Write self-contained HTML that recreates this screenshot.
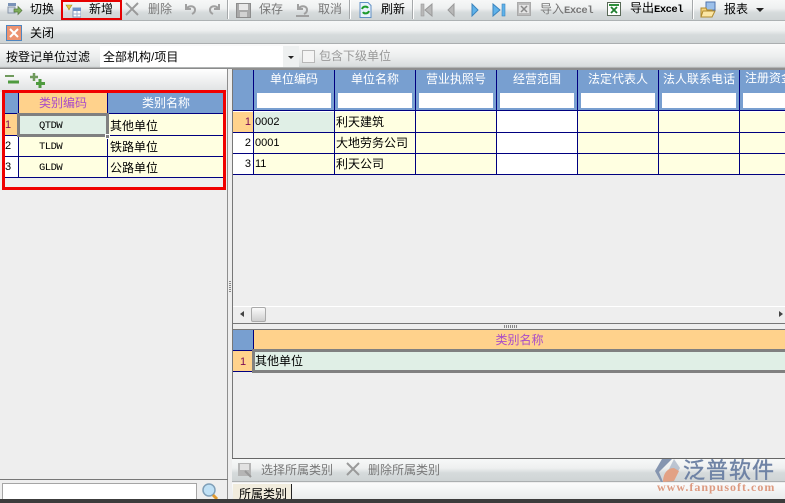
<!DOCTYPE html>
<html><head><meta charset="utf-8">
<style>
html,body{margin:0;padding:0;width:785px;height:503px;overflow:hidden;background:#eee}
body{position:relative;font:12px/14px "Liberation Sans","WenQuanYi Zen Hei","Noto Sans CJK SC",sans-serif;color:#000}
div,span,svg{position:absolute;box-sizing:border-box}
.t{white-space:nowrap}
.g{color:#777}
.bar{left:0;width:785px;background:linear-gradient(#f7f8f8,#eef0f0 40%,#d6dbdc 60%,#cfd4d5 95%,#8f9294)}
.m{font:10.5px/12px "Liberation Mono",monospace;letter-spacing:-.5px}
.x{position:static;font:bold 10.500px "Liberation Mono",monospace;letter-spacing:-.5px}
.sep{width:2px;top:0;height:19px;background:linear-gradient(90deg,#a5a8aa 50%,#fff 50%)}
.hd{color:#fff;text-align:center;background:#789fd0;white-space:nowrap;overflow:hidden}
.in{background:#fff;height:15px;top:93px}
.vl{width:1px;background:#000080}
.hl{height:1px;background:#000080}
.cell{background:#ffffe1}
</style></head><body>

<!-- toolbars -->
<div class="bar" style="top:0;height:21px"></div>
<div class="bar" style="top:21px;height:23px"></div>
<div class="bar" style="top:44px;height:25px;background:linear-gradient(#fbfbfb,#eceeee 50%,#d8dcdd 90%,#777)"></div>

<svg style="left:7px;top:2px" width="16" height="16" viewBox="0 0 16 16"><rect x="1" y="1" width="8" height="3" fill="#7a93b8"/><rect x="1" y="5" width="7" height="6" fill="#cfd8e4" stroke="#8896a8"/><path d="M7 7h4V4.500l4 4-4 4V10H7z" fill="#7fae5a" stroke="#55783f" stroke-width=".7"/></svg>
<span class="t" style="left:30px;top:2px">切换</span>

<svg style="left:65px;top:3px" width="16" height="15" viewBox="0 0 16 15"><path d="M1 2h6L5 5 4 7 3 5z" fill="#e3c93c" stroke="#a48d1d" stroke-width=".6"/><rect x="8" y="5" width="8" height="9" fill="#fff" stroke="#7f97bb"/><rect x="8" y="5" width="8" height="3" fill="#6f94c8"/><path d="M12 8v6M8 11h8" stroke="#9fb3cf"/></svg>
<span class="t" style="left:89px;top:2px">新增</span>
<div style="left:61px;top:0;width:61px;height:20px;border:2px solid #e60000"></div>

<svg style="left:125px;top:2px" width="14" height="14" viewBox="0 0 14 14"><path d="M1 1l12 12M13 1L1 13" stroke="#9a9a9a" stroke-width="2"/></svg>
<span class="t g" style="left:148px;top:2px">删除</span>
<svg style="left:184px;top:3px" width="13" height="13" viewBox="0 0 13 13"><path d="M2 1v5h5M3 5c3-3 8-2 8 2 0 2-1 3-3 4" fill="none" stroke="#a0a0a0" stroke-width="2"/></svg>
<svg style="left:208px;top:3px" width="13" height="13" viewBox="0 0 13 13"><path d="M11 1v5H6M10 5C7 2 2 3 2 7c0 2 1 3 3 4" fill="none" stroke="#a0a0a0" stroke-width="2"/></svg>
<div class="sep" style="left:227px"></div>
<svg style="left:236px;top:3px" width="15" height="15" viewBox="0 0 15 15"><rect x=".5" y=".5" width="14" height="14" fill="#a9a9a9" stroke="#8c8c8c"/><rect x="3" y="1" width="9" height="6" fill="#e8e8e8"/><rect x="4" y="9" width="7" height="5" fill="#d2d2d2"/></svg>
<span class="t g" style="left:259px;top:2px">保存</span>
<svg style="left:295px;top:3px" width="15" height="15" viewBox="0 0 15 15"><path d="M3 1v5h5M4 5c3-3 8-2 8 2 0 2-1 3-3 4" fill="none" stroke="#a0a0a0" stroke-width="2"/><path d="M1 13h13" stroke="#a0a0a0" stroke-width="2"/></svg>
<span class="t g" style="left:318px;top:2px">取消</span>
<div class="sep" style="left:349px"></div>
<svg style="left:359px;top:2px" width="13" height="16" viewBox="0 0 13 16"><path d="M1 .500h8l3 3v12H1z" fill="#e8f2fb" stroke="#5f8fc4"/><path d="M3 7c1-3 5-3 6-1M10 9c-1 3-5 3-6 1" fill="none" stroke="#1d9a2c" stroke-width="2"/></svg>
<span class="t" style="left:381px;top:2px">刷新</span>
<div class="sep" style="left:412px"></div>

<svg style="left:420px;top:3px" width="14" height="14" viewBox="0 0 14 14"><rect x="1" y="1" width="3" height="12" fill="#b8b8b8" stroke="#999" stroke-width=".6"/><path d="M12 1v12L5 7z" fill="#b8b8b8" stroke="#999"/></svg>
<svg style="left:446px;top:3px" width="10" height="14" viewBox="0 0 10 14"><path d="M8 1v12L2 7z" fill="#b8b8b8" stroke="#999"/></svg>
<svg style="left:470px;top:3px" width="10" height="14" viewBox="0 0 10 14"><path d="M2 1v12l6-6z" fill="#5fb2ea" stroke="#3b84bd"/></svg>
<svg style="left:492px;top:3px" width="14" height="14" viewBox="0 0 14 14"><path d="M1 1v12l7-6z" fill="#5fb2ea" stroke="#3b84bd"/><rect x="10" y="1" width="3" height="12" fill="#5fb2ea" stroke="#3b84bd" stroke-width=".6"/></svg>
<svg style="left:517px;top:2px" width="14" height="14" viewBox="0 0 14 14"><rect x=".5" y=".5" width="13" height="13" fill="#bbb" stroke="#aaa"/><rect x="2" y="3" width="10" height="8" fill="#e4e4e4"/><path d="M4 4l6 6M10 4l-6 6" stroke="#888" stroke-width="1.500"/></svg>
<span class="t g" style="left:540px;top:2px">导入<span class="x">Excel</span></span>
<svg style="left:607px;top:2px" width="14" height="14" viewBox="0 0 14 14"><rect x=".5" y=".5" width="13" height="13" fill="#fff" stroke="#5a6a58"/><rect x="2" y="2" width="10" height="2" fill="#2f8f3c"/><path d="M4 5l6 6M10 5l-6 6" stroke="#1f7f2f" stroke-width="1.800"/></svg>
<span class="t" style="left:630px;top:1px">导出<span class="x">Excel</span></span>
<div class="sep" style="left:692px"></div>
<svg style="left:700px;top:1px" width="16" height="17" viewBox="0 0 16 17"><rect x="6" y="1" width="9" height="8" fill="#9cc0ea" stroke="#4f74ad"/><path d="M1 7h5l1 2h5v7H1z" fill="#f4d27a" stroke="#b08a2e"/><path d="M3 10h12l-3 6H1z" fill="#fbe6a4" stroke="#b08a2e"/></svg>
<span class="t" style="left:724px;top:2px">报表</span>
<div style="left:756px;top:8px;width:0;height:0;border:4px solid transparent;border-top:4px solid #222;border-bottom:0"></div>

<svg style="left:6px;top:25px" width="16" height="16" viewBox="0 0 16 16"><rect x=".5" y=".5" width="15" height="15" fill="#ec9270" stroke="#4f86c0"/><path d="M4 4l8 8M12 4l-8 8" stroke="#fff" stroke-width="2"/></svg>
<span class="t" style="left:30px;top:26px">关闭</span>

<span class="t" style="left:6px;top:50px">按登记单位过滤</span>
<div style="left:100px;top:46px;width:199px;height:21px;background:#fff"></div>
<span class="t" style="left:103px;top:50px">全部机构/项目</span>
<div style="left:283px;top:46px;width:16px;height:21px;background:#eef0f0"></div>
<div style="left:288px;top:56px;border:3px solid transparent;border-top:3px solid #222;border-bottom:0"></div>
<div style="left:302px;top:50px;width:13px;height:13px;background:#f4f4f4;border:1px solid #b8b8b8"></div>
<span class="t" style="left:319px;top:49px;color:#999">包含下级单位</span>

<!-- left panel -->
<div style="left:0;top:69px;width:228px;height:23px;background:linear-gradient(#fff,#dfe1e2)"></div>
<svg style="left:5px;top:74px" width="16" height="12" viewBox="0 0 16 12"><path d="M0 2h9" stroke="#6f9a5c" stroke-width="2"/><path d="M3 8h11" stroke="#4e9a3e" stroke-width="3"/></svg>
<svg style="left:28px;top:72px" width="18" height="17" viewBox="0 0 18 17"><path d="M6 1v8M2 5h8" stroke="#6f9a5c" stroke-width="2.500"/><path d="M12 7v9M8 11.500h9" stroke="#4e9a3e" stroke-width="3"/></svg>
<div style="left:227px;top:69px;width:1px;height:432px;background:#8e8e8e"></div>

<div style="left:4px;top:93px;width:220px;height:85px;background:#eee"></div>
<div style="left:5px;top:93px;width:14px;height:21px;background:#789fd0"></div>
<div class="hd" style="left:19px;top:93px;width:88px;height:21px;line-height:21px;background:#ffd28c;color:#a94cc8">类别编码</div>
<div class="hd" style="left:108px;top:93px;width:116px;height:21px;line-height:21px">类别名称</div>
<div style="left:5px;top:114px;width:14px;height:21px;background:#ffd28c;color:#7a0a55;font-size:11px;line-height:22px;padding-left:0">1</div>
<div style="left:5px;top:136px;width:14px;height:20px;background:#fff;line-height:20px;font-size:11px">2</div>
<div style="left:5px;top:157px;width:14px;height:20px;background:#fff;line-height:20px;font-size:11px">3</div>
<div class="cell" style="left:19px;top:114px;width:205px;height:63px"></div>
<div style="left:19px;top:114px;width:88px;height:21px;background:#e0efe6"></div>
<div class="hl" style="left:5px;top:113px;width:219px"></div>
<div class="hl" style="left:5px;top:135px;width:219px"></div>
<div class="hl" style="left:5px;top:156px;width:219px"></div>
<div class="hl" style="left:5px;top:177px;width:219px"></div>
<div class="vl" style="left:18px;top:93px;height:85px"></div>
<div class="vl" style="left:107px;top:93px;height:85px"></div>
<div style="left:17px;top:113px;width:92px;height:24px;border:3px solid #808080"></div>
<div style="left:105px;top:134px;width:5px;height:5px;background:#808080;border:1px solid #fff"></div>
<span class="t m" style="left:39px;top:120px">QTDW</span>
<span class="t m" style="left:39px;top:141px">TLDW</span>
<span class="t m" style="left:39px;top:162px">GLDW</span>
<span class="t" style="left:110px;top:119px">其他单位</span>
<span class="t" style="left:110px;top:140px">铁路单位</span>
<span class="t" style="left:110px;top:161px">公路单位</span>
<div style="left:2px;top:90px;width:224px;height:100px;border:3px solid #f00000"></div>

<div style="left:0;top:479px;width:228px;height:1px;background:#777"></div>
<div style="left:2px;top:483px;width:195px;height:18px;background:#fff;border:1px solid #a5a5a5"></div>
<svg style="left:201px;top:483px" width="18" height="17" viewBox="0 0 18 17"><circle cx="8" cy="7" r="6" fill="#bfe0f5" stroke="#7f9fb8" stroke-width="1.500"/><path d="M12 12l4 4" stroke="#e09a30" stroke-width="3"/></svg>

<!-- splitter -->
<div style="left:229px;top:281px;width:2px;height:12px;background:repeating-linear-gradient(#888 0 1px,#eee 1px 2px)"></div>

<!-- right grid -->
<div style="left:232px;top:68px;width:553px;height:2px;background:#8e8e8e"></div>
<div style="left:232px;top:69px;width:1px;height:389px;background:#777"></div>
<div style="left:233px;top:70px;width:552px;height:40px;background:#789fd0"></div>
<div class="in" style="left:257px;width:74px"></div>
<div class="in" style="left:338px;width:74px"></div>
<div class="in" style="left:419px;width:74px"></div>
<div class="in" style="left:500px;width:74px"></div>
<div class="in" style="left:581px;width:74px"></div>
<div class="in" style="left:662px;width:74px"></div>
<div class="in" style="left:743px;width:42px"></div>
<div class="hd" style="left:254px;top:72px;width:80px;background:none">单位编码</div>
<div class="hd" style="left:335px;top:72px;width:80px;background:none">单位名称</div>
<div class="hd" style="left:416px;top:72px;width:80px;background:none">营业执照号</div>
<div class="hd" style="left:497px;top:72px;width:80px;background:none">经营范围</div>
<div class="hd" style="left:578px;top:72px;width:80px;background:none">法定代表人</div>
<div class="hd" style="left:659px;top:72px;width:80px;background:none">法人联系电话</div>
<div class="hd" style="left:740px;top:71px;width:45px;background:none;text-align:left;padding-left:5px">注册资金</div>

<div style="left:233px;top:111px;width:552px;height:1px;background:#fff"></div>
<div class="cell" style="left:254px;top:112px;width:242px;height:62px"></div>
<div style="left:497px;top:112px;width:80px;height:62px;background:#fff"></div>
<div class="cell" style="left:578px;top:112px;width:207px;height:62px"></div>
<div style="left:254px;top:112px;width:80px;height:20px;background:#e0efe6"></div>
<div style="left:233px;top:112px;width:20px;height:20px;background:#ffd28c"></div>
<div style="left:233px;top:133px;width:20px;height:41px;background:#fff"></div>
<span class="t" style="left:233px;top:115px;width:18px;text-align:right;color:#7a0a55;font-size:11px">1</span>
<span class="t" style="left:233px;top:136px;width:18px;text-align:right;font-size:11px">2</span>
<span class="t" style="left:233px;top:157px;width:18px;text-align:right;font-size:11px">3</span>
<div style="left:233px;top:110px;width:552px;height:1px;background:#000080"></div>
<div class="hl" style="left:233px;top:132px;width:552px"></div>
<div class="hl" style="left:233px;top:153px;width:552px"></div>
<div class="hl" style="left:233px;top:174px;width:552px"></div>
<div class="vl" style="left:253px;top:70px;height:105px"></div>
<div class="vl" style="left:334px;top:70px;height:105px"></div>
<div class="vl" style="left:415px;top:70px;height:105px"></div>
<div class="vl" style="left:496px;top:70px;height:105px"></div>
<div class="vl" style="left:577px;top:70px;height:105px"></div>
<div class="vl" style="left:658px;top:70px;height:105px"></div>
<div class="vl" style="left:739px;top:70px;height:105px"></div>
<span class="t" style="left:255px;top:115px;font-size:11px">0002</span>
<span class="t" style="left:255px;top:136px;font-size:11px">0001</span>
<span class="t" style="left:255px;top:157px;font-size:11px">11</span>
<span class="t" style="left:336px;top:115px">利天建筑</span>
<span class="t" style="left:336px;top:136px">大地劳务公司</span>
<span class="t" style="left:336px;top:157px">利天公司</span>

<!-- scrollbar -->
<div style="left:233px;top:306px;width:552px;height:1px;background:#fff"></div>
<div style="left:240px;top:311px;border:3px solid transparent;border-right:4px solid #444;border-left:0"></div>
<div style="left:251px;top:307px;width:15px;height:15px;border:1px solid #aaa;border-radius:2px;background:linear-gradient(#fafafa,#cfcfcf)"></div>
<div style="left:779px;top:311px;border:3px solid transparent;border-left:4px solid #444;border-right:0"></div>
<div style="left:232px;top:323px;width:553px;height:1px;background:#777"></div>
<div style="left:504px;top:325px;width:14px;height:3px;background:repeating-linear-gradient(90deg,#888 0 1px,#eee 1px 2px)"></div>

<!-- lower grid -->
<div style="left:232px;top:329px;width:553px;height:1px;background:#777"></div>
<div style="left:232px;top:329px;width:1px;height:129px;background:#777"></div>
<div style="left:233px;top:330px;width:20px;height:20px;background:#789fd0"></div>
<div class="hd" style="left:254px;top:330px;width:531px;height:20px;line-height:21px;background:#ffd28c;color:#a94cc8">类别名称</div>
<div style="left:233px;top:351px;width:20px;height:21px;background:#ffd28c;color:#7a0a55;font-size:11px;line-height:22px;text-align:center">1</div>
<div class="hl" style="left:233px;top:350px;width:20px"></div>
<div class="hl" style="left:233px;top:371px;width:20px"></div>
<div class="vl" style="left:253px;top:330px;height:20px"></div>
<div style="left:252px;top:349px;width:540px;height:24px;background:#e0efe6;border:3px solid #808080"></div>
<span class="t" style="left:255px;top:354px">其他单位</span>
<div style="left:232px;top:458px;width:553px;height:1px;background:#666"></div>

<!-- lower toolbar -->
<div class="bar" style="left:232px;top:459px;width:553px;height:23px"></div>
<svg style="left:237px;top:462px" width="16" height="16" viewBox="0 0 16 16"><rect x="1" y="1" width="13" height="13" fill="#b5b5b5"/><rect x="3" y="2" width="9" height="6" fill="#e2e2e2"/><path d="M8 9l6 6" stroke="#999" stroke-width="2"/></svg>
<span class="t g" style="left:261px;top:463px">选择所属类别</span>
<svg style="left:346px;top:462px" width="14" height="14" viewBox="0 0 14 14"><path d="M1 1l12 12M13 1L1 13" stroke="#9a9a9a" stroke-width="2"/></svg>
<span class="t g" style="left:368px;top:463px">删除所属类别</span>

<!-- tab strip -->
<div style="left:232px;top:483px;width:553px;height:16px;background:linear-gradient(#fbfbfb,#e9ecec)"></div>
<div style="left:233px;top:484px;width:58px;height:15px;background:#f1ecdd;overflow:hidden;white-space:nowrap;padding-left:6px;line-height:21px">所属类别</div>
<div style="left:291px;top:484px;width:1px;height:15px;background:#222"></div>

<!-- logo -->
<svg style="left:654px;top:458px" width="28" height="26" viewBox="0 0 28 26"><path d="M8 1h10L5 14l4 10H7L1 13z" fill="#8595b0"/><path d="M20 1l6 9-2 3H14z" fill="#8595b0" opacity=".5"/><path d="M9 24c0-8 4-14 11-14l5 3-5 10z" fill="#e2a184"/></svg>
<span class="t" style="left:683px;top:458px;font-size:22px;line-height:26px;color:#6f83a5;letter-spacing:1px;-webkit-text-stroke:.4px #6f83a5">泛普软件</span>
<span class="t" style="left:657px;top:481px;font:bold 12px/13px 'Liberation Serif',serif;color:#dd9a80;letter-spacing:1px">www.fanpusoft.com</span>

<!-- bottom dark strip -->
<div style="left:0;top:499px;width:785px;height:4px;background:#3c3c3c"></div>
</body></html>
